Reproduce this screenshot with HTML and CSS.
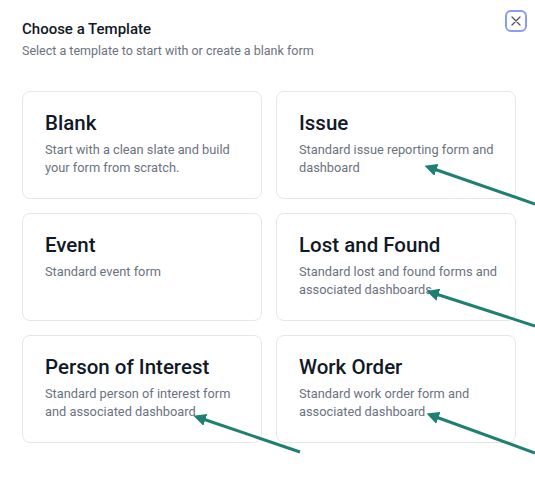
FILE: index.html
```html
<!DOCTYPE html>
<html>
<head>
<meta charset="utf-8">
<link rel="stylesheet" href="styles.css">
</head>
<body>
<div class="dialog">
  <header class="head">
    <div>
      <h1 class="title">Choose a Template</h1>
      <p class="sub">Select a template to start with or create a blank form</p>
    </div>
    <button class="close" aria-label="Close">
      <svg width="10" height="10" viewBox="0 0 10 10"><path d="M1 1L9 9M9 1L1 9" stroke="#4b5563" stroke-width="1.3" stroke-linecap="round"/></svg>
    </button>
  </header>
  <div class="grid">
    <div class="card"><h2>Blank</h2><p>Start with a clean slate and build your form from scratch.</p></div>
    <div class="card"><h2>Issue</h2><p>Standard issue reporting form and dashboard</p></div>
    <div class="card"><h2>Event</h2><p>Standard event form</p></div>
    <div class="card"><h2>Lost and Found</h2><p>Standard lost and found forms and associated dashboards</p></div>
    <div class="card"><h2>Person of Interest</h2><p>Standard person of interest form and associated dashboard</p></div>
    <div class="card"><h2>Work Order</h2><p>Standard work order form and associated dashboard</p></div>
  </div>
</div>
<svg class="arrows" width="535" height="477" viewBox="0 0 535 477">
  <defs>
    <marker id="ah" viewBox="0 0 10 10" refX="2" refY="5" markerWidth="4.2" markerHeight="4.2" orient="auto-start-reverse">
      <path d="M0 0L10 5L0 10z" fill="#1f7f70"/>
    </marker>
  </defs>
  <g stroke="#1f7f70" stroke-width="3" fill="none">
    <line x1="535" y1="204" x2="434" y2="169" marker-end="url(#ah)"/>
    <line x1="535" y1="326" x2="436" y2="294" marker-end="url(#ah)"/>
    <line x1="300" y1="452" x2="203" y2="419" marker-end="url(#ah)"/>
    <line x1="535" y1="453" x2="436" y2="417" marker-end="url(#ah)"/>
  </g>
</svg>
</body>
</html>
```
FILE: styles.css
```css
html, body {
  margin: 0;
  padding: 0;
  background: #ffffff;
}
body {
  font-family: Roboto, "Noto Sans", sans-serif;
  width: 535px;
  height: 477px;
  overflow: hidden;
  position: relative;
}
.dialog {
  padding: 10px 8px 0 22px;
}
.head {
  display: flex;
  justify-content: space-between;
  align-items: flex-start;
}
.title {
  margin: 9px 0 0;
  font-size: 15px;
  line-height: 20px;
  font-weight: 500;
  color: #111827;
}
.sub {
  margin: 3px 0 0;
  font-size: 12.5px;
  line-height: 18px;
  color: #6b7280;
}
.close {
  width: 22px;
  height: 22px;
  padding: 0;
  border: 2px solid #8b9cf5;
  border-radius: 6px;
  background: #fff;
  display: flex;
  align-items: center;
  justify-content: center;
}
.grid {
  margin-top: 31px;
  display: grid;
  grid-template-columns: 240px 240px;
  grid-auto-rows: 108px;
  gap: 14px;
}
.card {
  box-sizing: border-box;
  border: 1px solid #e5e7eb;
  border-radius: 8px;
  padding: 17px 10px 0 22px;
  background: #fff;
}
.card h2 {
  margin: 0;
  font-size: 20.5px;
  line-height: 28px;
  font-weight: 500;
  color: #111827;
}
.card p {
  margin: 4px 0 0;
  font-size: 12.8px;
  line-height: 18px;
  color: #6b7280;
}
.arrows {
  position: absolute;
  left: 0;
  top: 0;
  pointer-events: none;
}
```
